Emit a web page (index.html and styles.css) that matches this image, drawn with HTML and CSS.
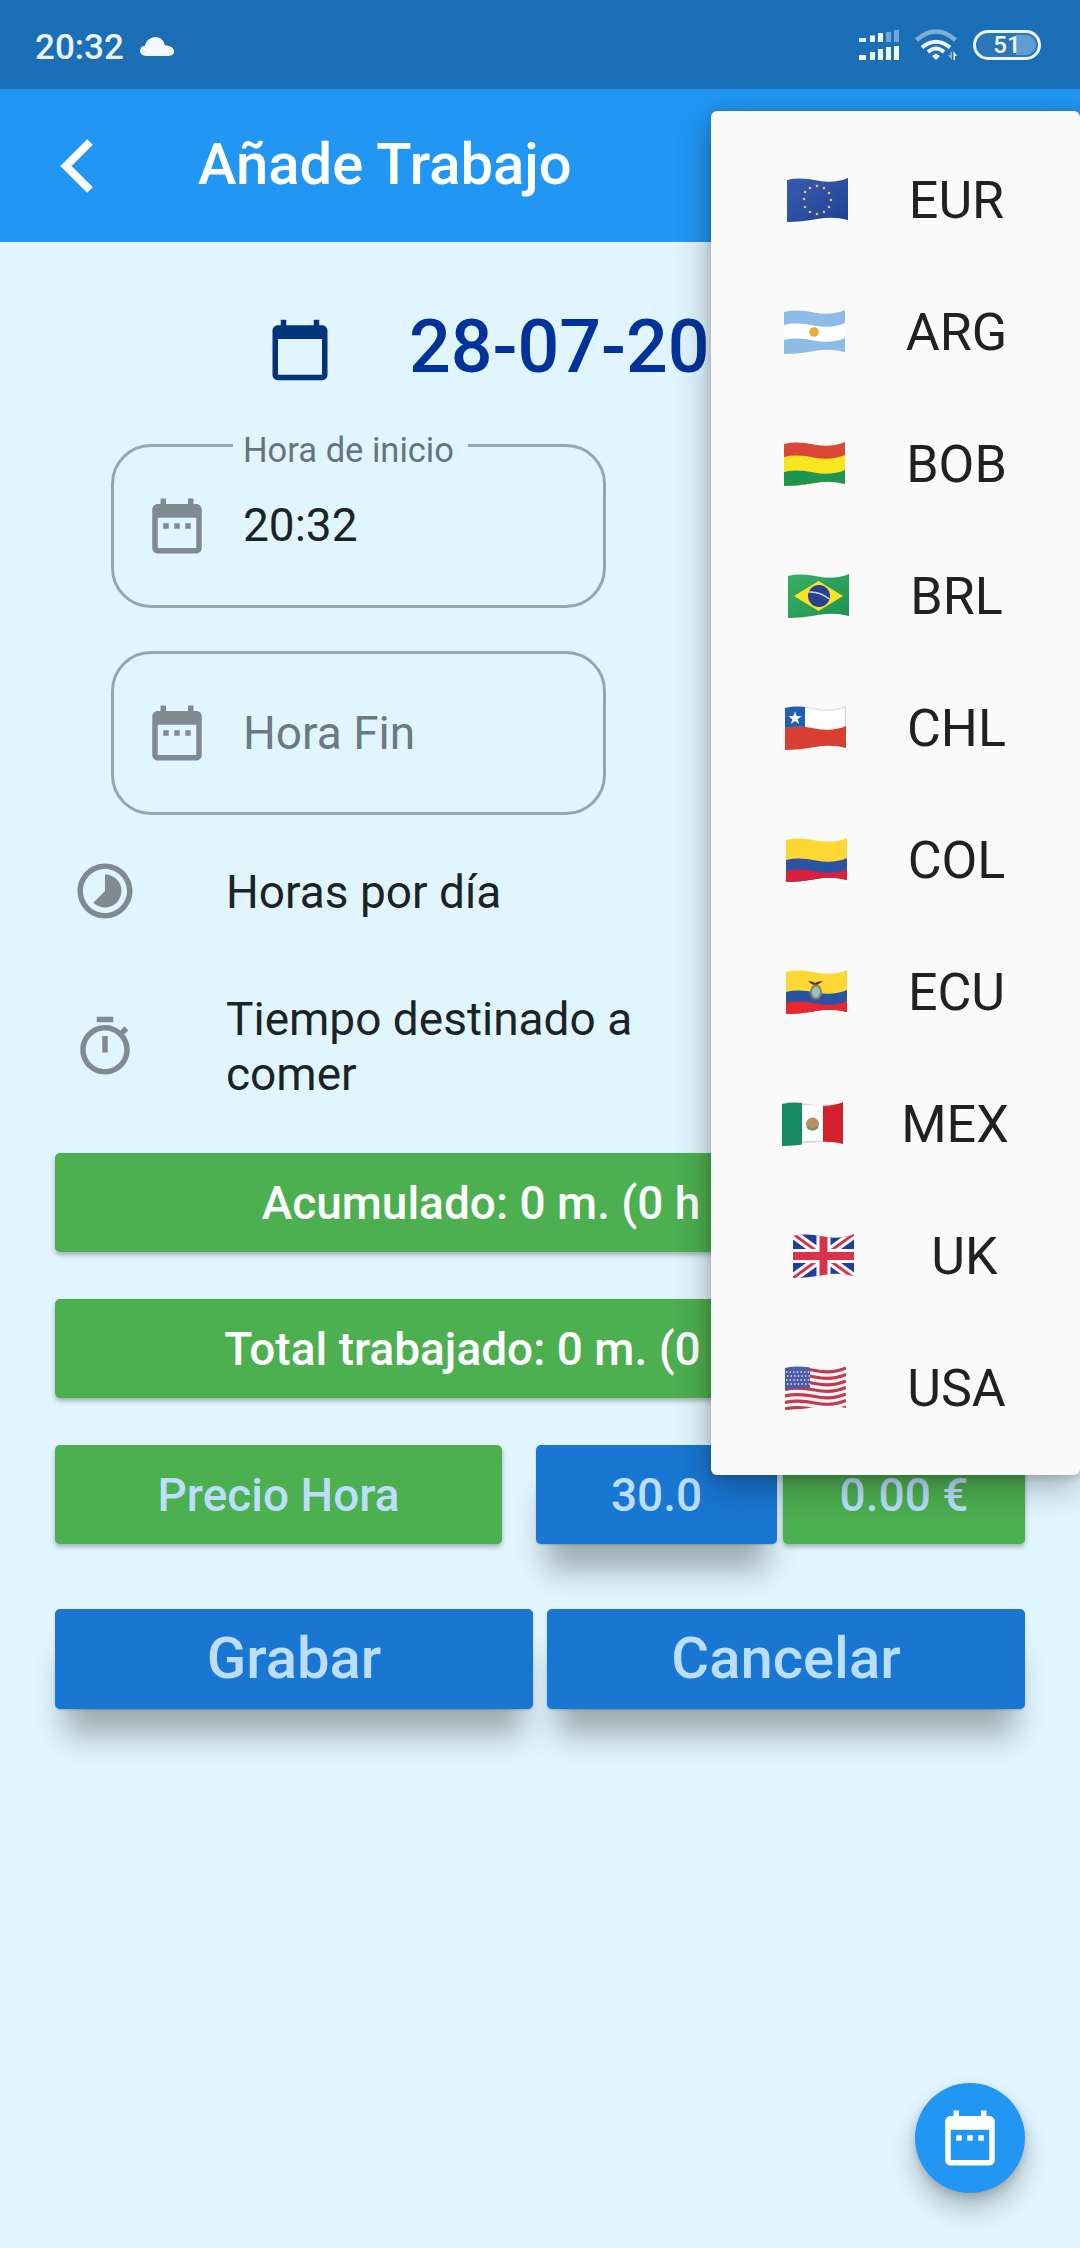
FILE: index.html
```html
<!DOCTYPE html>
<html lang="es">
<head>
<meta charset="utf-8">
<title>Añade Trabajo</title>
<link rel="stylesheet" href="styles.css">
</head>
<body>
<svg class="defs" width="0" height="0" aria-hidden="true">
  <defs>
    <clipPath id="wave"><path d="M0 2Q13 -1 30 2.500T61 0V42Q46 38 30 41T0 44Z"/></clipPath>
    <linearGradient id="sheen" x1="0" y1="0" x2="1" y2="1"><stop offset="0" stop-color="#fff" stop-opacity=".1"/><stop offset="1" stop-color="#000" stop-opacity=".12"/></linearGradient>
    <symbol id="date-range" viewBox="0 0 24 24"><path d="M7 11h2v2H7zm4 0h2v2h-2zm4 0h2v2h-2z"/><path d="M19 4h-1V2h-2v2H8V2H6v2H5c-1.100 0-2 .9-2 2v14c0 1.100.9 2 2 2h14c1.100 0 2-.9 2-2V6c0-1.100-.9-2-2-2zm0 16H5V9h14v11z"/></symbol>
  </defs>
</svg>
<div class="phone">
  <header class="status">
    <span class="clock">20:32</span>
    <svg class="cloud" viewBox="0 0 34 19"><path d="M6 19C2.500 19 0 16.800 0 13.800 0 11 2 9 5 8.700 6 3.500 10.500 0 15.500 0 20.500 0 24 3.500 25 8.500 30.500 8.500 34 10.800 34 14.300 34 17 32 19 28.500 19Z"/></svg>
    <span class="status-spacer"></span>
    <svg class="signal" viewBox="0 0 40 30">
      <g fill="#eef6fc"><rect x="0" y="8" width="7" height="4"/><rect x="11" y="5.500" width="5" height="6.500"/><rect x="19" y="3" width="5" height="9"/></g>
      <g fill="#6fa8d6"><rect x="27" y="2" width="5" height="10"/><rect x="35" y="0" width="5" height="12"/></g>
      <g fill="#eef6fc"><rect x="0" y="25" width="7" height="5"/><rect x="11" y="22" width="5" height="8"/><rect x="19" y="19" width="5" height="11"/><rect x="27" y="17" width="5" height="13"/><rect x="35" y="16" width="5" height="14"/></g>
    </svg>
    <svg class="wifi" viewBox="0 0 42 31">
      <path d="M1.500 11Q21 -6 40.500 11" fill="none" stroke="#7fb0d8" stroke-width="4.500"/>
      <path d="M7 18.500Q21 7 35 18.500" fill="none" stroke="#f2f8fd" stroke-width="4"/>
      <path d="M13 23Q21 16 29 23" fill="none" stroke="#f2f8fd" stroke-width="4"/>
      <path d="M17 27L21 24.500 25 27 21 31Z" fill="#f2f8fd"/>
      <path d="M33 26h2.500v-3h1.500v8Z" fill="#8ab8dc"/>
      <path d="M38.500 31v-9l3.500 5h-2v4Z" fill="#f2f8fd"/>
    </svg>
    <div class="battery"><span class="battery-fill"></span><span class="battery-num">51</span></div>
  </header>

  <div class="appbar">
    <svg class="back" viewBox="0 0 33 54"><path d="M30 3L6 27 30 51" fill="none" stroke="#fff" stroke-width="8"/></svg>
    <h1 class="title">Añade Trabajo</h1>
  </div>

  <main class="content">
    <div class="date-row">
      <svg class="icon date-icon" viewBox="0 0 24 24"><path d="M20 3h-1V1h-2v2H7V1H5v2H4c-1.100 0-2 .9-2 2v16c0 1.100.9 2 2 2h16c1.100 0 2-.9 2-2V5c0-1.100-.9-2-2-2zm0 18H4V8h16v13z"/></svg>
      <span class="date-text">28-07-2020</span>
    </div>

    <div class="field field-first">
      <span class="field-label">Hora de inicio</span>
      <svg class="icon grey"><use href="#date-range"/></svg>
      <span class="field-value filled">20:32</span>
    </div>
    <div class="field field-second">
      <svg class="icon grey"><use href="#date-range"/></svg>
      <span class="field-value placeholder">Hora Fin</span>
    </div>

    <div class="info-row info-hours">
      <svg class="icon grey" viewBox="0 0 24 24"><path d="M16.240 7.760C15.070 6.590 13.540 6 12 6v6l-4.240 4.240c2.340 2.340 6.140 2.340 8.490 0 2.340-2.340 2.340-6.140-.01-8.480zM12 2C6.480 2 2 6.480 2 12s4.480 10 10 10 10-4.480 10-10S17.520 2 12 2zm0 18c-4.420 0-8-3.580-8-8s3.580-8 8-8 8 3.580 8 8-3.580 8-8 8z"/></svg>
      <span class="info-text">Horas por día</span>
    </div>
    <div class="info-row info-meal">
      <svg class="icon grey" viewBox="0 0 24 24"><path d="M15 1H9v2h6V1zm-4 13h2V8h-2v6zm8.030-6.610l1.420-1.420c-.43-.51-.9-.99-1.410-1.410l-1.420 1.420C16.070 4.740 14.120 4 12 4c-4.970 0-9 4.030-9 9s4.020 9 9 9 9-4.030 9-9c0-2.120-.74-4.070-1.970-5.610zM12 20c-3.870 0-7-3.130-7-7s3.130-7 7-7 7 3.130 7 7-3.130 7-7 7z"/></svg>
      <span class="info-text">Tiempo destinado a<br>comer</span>
    </div>

    <div class="bars">
      <div class="bar green">Acumulado: 0 m. (0 h 0 m.)</div>
      <div class="bar green">Total trabajado: 0 m. (0 h 0 m.)</div>
      <div class="price-row">
        <div class="bar green pale price-label">Precio Hora</div>
        <div class="bar blue pale price-value">30.0</div>
        <div class="bar green pale price-total">0.00 €</div>
      </div>
      <div class="action-row">
        <div class="bar blue pale action">Grabar</div>
        <div class="bar blue pale action">Cancelar</div>
      </div>
    </div>
  </main>

  <nav class="menu">
    <div class="menu-item">
      <svg class="flag" viewBox="0 0 61 44"><g clip-path="url(#wave)"><rect width="61" height="44" fill="#2349a6"/><rect width="61" height="44" fill="url(#sheen)"/><g fill="#e6c84e"><circle cx="30" cy="8" r="1.300"/><circle cx="37" cy="10" r="1.300"/><circle cx="42" cy="15" r="1.300"/><circle cx="44" cy="22" r="1.300"/><circle cx="42" cy="29" r="1.300"/><circle cx="37" cy="34" r="1.300"/><circle cx="30" cy="36" r="1.300"/><circle cx="23" cy="34" r="1.300"/><circle cx="18" cy="29" r="1.300"/><circle cx="17" cy="21" r="1.300"/><circle cx="18" cy="14" r="1.300"/><circle cx="23" cy="10" r="1.300"/></g></g></svg>
      <span class="code">EUR</span>
    </div>
    <div class="menu-item">
      <svg class="flag" viewBox="0 0 61 44"><g clip-path="url(#wave)"><rect width="61" height="44" fill="#8dbce6"/><path d="M0 15Q13 12 30 15.500T61 13V44H0Z" fill="#fff"/><path d="M0 30Q13 27 30 30.500T61 28V44H0Z" fill="#8dbce6"/><circle cx="30" cy="22" r="4.800" fill="#e9ad35"/></g></svg>
      <span class="code">ARG</span>
    </div>
    <div class="menu-item">
      <svg class="flag" viewBox="0 0 61 44"><g clip-path="url(#wave)"><rect width="61" height="44" fill="#dc4636"/><path d="M0 15Q13 12 30 15.500T61 13V44H0Z" fill="#fbe51f"/><path d="M0 30Q13 27 30 30.500T61 28V44H0Z" fill="#1f9650"/></g></svg>
      <span class="code">BOB</span>
    </div>
    <div class="menu-item">
      <svg class="flag" viewBox="0 0 61 44"><g clip-path="url(#wave)"><rect width="61" height="44" fill="#22a556"/><rect width="61" height="44" fill="url(#sheen)"/><path d="M6 22L30.500 7 55 22 30.500 37Z" fill="#fbe227"/><circle cx="31" cy="22" r="11" fill="#27438f"/><path d="M20.500 18Q31 17 41.500 25" fill="none" stroke="#cfd8e8" stroke-width="1.500"/></g></svg>
      <span class="code">BRL</span>
    </div>
    <div class="menu-item">
      <svg class="flag" viewBox="0 0 61 44"><g clip-path="url(#wave)"><rect width="61" height="44" fill="#fff"/><path d="M0 2Q13 -1 30 2.500T61 0" fill="none" stroke="#d6d6d6" stroke-width="2"/><path d="M60.500 0V22" stroke="#d6d6d6" stroke-width="1.500"/><path d="M0 22Q13 19 30 22.500T61 20V44H0Z" fill="#d83f33"/><path d="M0 0H20V21Q10 20 0 22Z" fill="#1f5fb4"/><path d="M10 5.500l1.700 4.600 4.800.1-3.800 3 1.400 4.700-4.100-2.800-4.100 2.800 1.400-4.700-3.800-3 4.800-.1Z" fill="#fff"/></g></svg>
      <span class="code">CHL</span>
    </div>
    <div class="menu-item">
      <svg class="flag" viewBox="0 0 61 44"><g clip-path="url(#wave)"><rect width="61" height="44" fill="#fdd835"/><path d="M0 22Q13 19 30 22.500T61 20V44H0Z" fill="#2a53a6"/><path d="M0 33Q13 30 30 33.500T61 31V44H0Z" fill="#d8203f"/></g></svg>
      <span class="code">COL</span>
    </div>
    <div class="menu-item">
      <svg class="flag" viewBox="0 0 61 44"><g clip-path="url(#wave)"><rect width="61" height="44" fill="#fdd835"/><path d="M0 22Q13 19 30 22.500T61 20V44H0Z" fill="#2a53a6"/><path d="M0 33Q13 30 30 33.500T61 31V44H0Z" fill="#e8272f"/><path d="M22 11.500Q26 10.500 29 13 32 11 37 11 33 14 31 15H28Q25 14 22 11.500Z" fill="#4a3b25"/><ellipse cx="30" cy="22" rx="6" ry="7.500" fill="#9b7f42"/><ellipse cx="30" cy="22" rx="4" ry="5.500" fill="#8fc4cf"/></g></svg>
      <span class="code">ECU</span>
    </div>
    <div class="menu-item item-mex">
      <svg class="flag" viewBox="0 0 61 44"><g clip-path="url(#wave)"><rect width="61" height="44" fill="#fff"/><path d="M0 0H20V44H0Z" fill="#178a63"/><path d="M41 0H61V44H41Z" fill="#d2202f"/><path d="M20 2.500Q30 1 41 3.500M20 40.500Q30 39 41 40.500" stroke="#d8d8d8" stroke-width="2" fill="none"/><circle cx="30.500" cy="22" r="6.500" fill="#b98f5f"/><path d="M25 25Q30.500 30 36 25" stroke="#5f9a63" stroke-width="2" fill="none"/></g></svg>
      <span class="code">MEX</span>
    </div>
    <div class="menu-item item-uk">
      <svg class="flag" viewBox="0 0 61 44"><g clip-path="url(#wave)"><rect width="61" height="44" fill="#1f4096"/><path d="M0 0L61 44M61 0L0 44" stroke="#fff" stroke-width="9"/><path d="M0 0L61 44M61 0L0 44" stroke="#d7334a" stroke-width="3"/><path d="M30.500 0V44M0 22H61" stroke="#fff" stroke-width="14"/><path d="M30.500 0V44M0 22H61" stroke="#d7334a" stroke-width="8"/></g></svg>
      <span class="code">UK</span>
    </div>
    <div class="menu-item">
      <svg class="flag" viewBox="0 0 61 44"><g clip-path="url(#wave)"><rect width="61" height="44" fill="#f7f4f4"/><g fill="none" stroke="#c13b4f" stroke-width="3.300"><path d="M0 4Q13 1 30 4.500T61 2"/><path d="M0 10.500Q13 7.500 30 11T61 8.500"/><path d="M0 17Q13 14 30 17.500T61 15"/><path d="M0 23.500Q13 20.500 30 24T61 21.500"/><path d="M0 30Q13 27 30 30.500T61 28"/><path d="M0 36.500Q13 33.500 30 37T61 34.500"/><path d="M0 43Q13 40 30 43.500T61 41"/></g><path d="M0 0H25V22Q12 21 0 24Z" fill="#4c5ca6"/><g stroke="#e7e9f4" stroke-width="1.400" stroke-dasharray="1.400 2.200" fill="none"><path d="M1 6H25"/><path d="M2 10H25"/><path d="M1 14H25"/><path d="M2 18H25"/></g></g></svg>
      <span class="code">USA</span>
    </div>
  </nav>

  <button class="fab" type="button" aria-label="Calendario"><svg class="icon white"><use href="#date-range"/></svg></button>
</div>
</body>
</html>
```

FILE: styles.css
```css
* { box-sizing: border-box; }
html, body { margin: 0; padding: 0; }
body { font-family: Roboto, "Liberation Sans", sans-serif; }
.defs { position: absolute; }
.phone { position: relative; width: 1080px; height: 2248px; overflow: hidden; background: #e1f5fe; display: flex; flex-direction: column; }

.status { height: 89px; flex: none; background: #1a6fb6; display: flex; align-items: center; padding: 0 39px 0 35px; color: #eaf3fa; }
.clock { font-size: 35px; font-weight: 500; margin-top: 5px; }
.cloud { width: 34px; height: 19px; margin-left: 16px; margin-top: 3px; fill: #f2f8fd; }
.status-spacer { flex: 1; }
.signal { width: 40px; height: 30px; margin-top: 1px; }
.wifi { width: 42px; height: 31px; margin-left: 16px; }
.battery { position: relative; width: 68px; height: 30px; margin-left: 16px; border: 3px solid #eef6fc; border-radius: 15px; overflow: hidden; display: flex; align-items: center; justify-content: center; background: #2a76b8; }
.battery-fill { position: absolute; top: 2px; bottom: 2px; left: 40px; right: 2px; background: #5f9dd2; border-radius: 0 10px 10px 0; }
.battery-num { position: relative; font-size: 24px; font-weight: 500; color: #f2f8fd; line-height: 1; }

.appbar { height: 153px; flex: none; background: #2196f3; display: flex; align-items: center; padding-left: 60px; }
.back { width: 33px; height: 54px; }
.title { margin: -3px 0 0 105px; font-size: 58px; font-weight: 500; color: #fff; line-height: 1; }

.content { flex: 1; display: flex; flex-direction: column; }
.icon { width: 66px; height: 66px; flex: none; }
.grey { fill: #7f8b90; }
.white { fill: #fff; }

.date-row { display: flex; align-items: center; height: 66px; margin: 75px 0 0 267px; }
.date-icon { fill: #02347a; }
.date-text { margin-left: 76px; font-size: 73.500px; font-weight: 500; color: #003399; white-space: nowrap; line-height: 1; margin-top: -4px; }

.field { position: relative; display: flex; align-items: center; width: 495px; height: 164px; margin-left: 111px; padding-left: 30px; border: 3px solid #97a6ae; border-radius: 40px; }
.field-first { margin-top: 61px; }
.field-second { margin-top: 43px; }
.field-label { position: absolute; left: 119px; top: -16px; padding: 0 14px 0 10px; background: linear-gradient(#e1f5fe, #e1f5fe) no-repeat top / 100% 24px; font-size: 34.500px; line-height: 38px; color: #66757b; white-space: nowrap; }
.field-value { margin-left: 33px; font-size: 46px; color: #1c2326; }
.filled { margin-top: -3px; }
.placeholder { color: #6b7a80; }

.info-row { display: flex; align-items: center; margin-left: 72px; }
.info-text { margin-left: 88px; padding-top: 2px; font-size: 46px; line-height: 55px; color: #1c2326; }
.info-hours { margin-top: 43px; height: 66px; }
.info-meal { margin-top: 66px; }
.info-meal .icon { margin: 2px 0 0; }

.bars { display: flex; flex-direction: column; width: 970px; margin: 51px 0 0 55px; }
.bar { height: 99px; display: flex; align-items: center; justify-content: center; border-radius: 5px; font-size: 46px; font-weight: 500; white-space: nowrap; color: #fff; }
.green { background: #4caf50; box-shadow: 0 3px 5px rgba(0, 0, 0, .28); }
.blue { background: #1976d2; box-shadow: 0 1px 2px rgba(0, 0, 0, .2), 0 36px 30px -10px rgba(0, 0, 0, .3); }
.pale { color: #bbdefb; }
.bars > .bar + .bar { margin-top: 47px; }
.price-row { display: flex; margin-top: 47px; }
.price-label { width: 447px; }
.price-value { width: 241px; margin-left: 34px; }
.price-total { width: 242px; margin-left: 6px; }
.action-row { display: flex; gap: 14px; margin-top: 65px; }
.action { flex: 1; height: 100px; padding-bottom: 2px; font-size: 58px; }

.menu { position: absolute; left: 711px; right: 0; top: 111px; height: 1364px; background: #fafafa; border-radius: 6px; box-shadow: 0 10px 36px rgba(0, 0, 0, .32), 0 2px 8px rgba(0, 0, 0, .15); display: flex; flex-direction: column; padding: 23px 0; }
.menu-item { height: 132px; flex: none; display: flex; align-items: center; justify-content: center; gap: 61px; }
.item-mex { gap: 58px; }
.item-uk { gap: 77px; }
.flag { width: 61px; height: 44px; flex: none; }
.code { font-size: 52px; color: #212121; line-height: 1; margin-top: 1px; }

.fab { position: absolute; left: 915px; top: 2083px; width: 110px; height: 110px; padding: 0; border: 0; border-radius: 50%; background: #2196f3; display: flex; align-items: center; justify-content: center; box-shadow: 0 16px 26px rgba(0, 0, 0, .24), 0 4px 8px rgba(0, 0, 0, .14); }
```
